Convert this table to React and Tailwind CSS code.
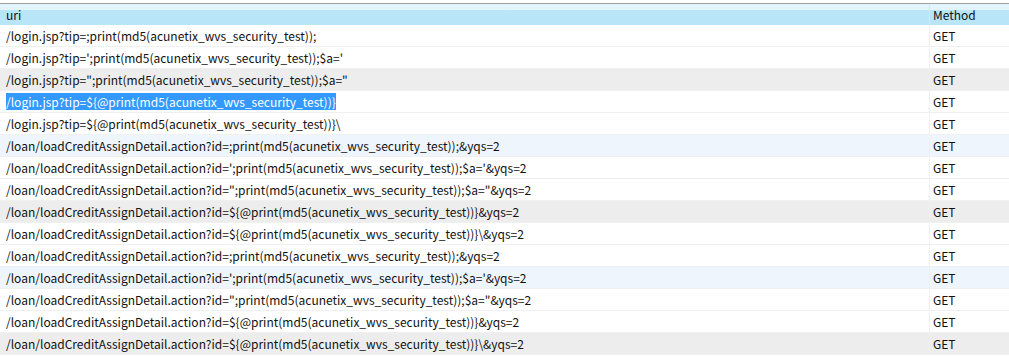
import React from "react";

const rows = [
  ["/login.jsp?tip=;print(md5(acunetix_wvs_security_test));", "w"],
  ["/login.jsp?tip=';print(md5(acunetix_wvs_security_test));$a='", "w"],
  ["/login.jsp?tip=\";print(md5(acunetix_wvs_security_test));$a=\"", "g"],
  ["/login.jsp?tip=${@print(md5(acunetix_wvs_security_test))}", "s"],
  ["/login.jsp?tip=${@print(md5(acunetix_wvs_security_test))}\\", "w"],
  ["/loan/loadCreditAssignDetail.action?id=;print(md5(acunetix_wvs_security_test));&yqs=2", "b"],
  ["/loan/loadCreditAssignDetail.action?id=';print(md5(acunetix_wvs_security_test));$a='&yqs=2", "w"],
  ["/loan/loadCreditAssignDetail.action?id=\";print(md5(acunetix_wvs_security_test));$a=\"&yqs=2", "w"],
  ["/loan/loadCreditAssignDetail.action?id=${@print(md5(acunetix_wvs_security_test))}&yqs=2", "g"],
  ["/loan/loadCreditAssignDetail.action?id=${@print(md5(acunetix_wvs_security_test))}\\&yqs=2", "w"],
  ["/loan/loadCreditAssignDetail.action?id=;print(md5(acunetix_wvs_security_test));&yqs=2", "w"],
  ["/loan/loadCreditAssignDetail.action?id=';print(md5(acunetix_wvs_security_test));$a='&yqs=2", "b"],
  ["/loan/loadCreditAssignDetail.action?id=\";print(md5(acunetix_wvs_security_test));$a=\"&yqs=2", "w"],
  ["/loan/loadCreditAssignDetail.action?id=${@print(md5(acunetix_wvs_security_test))}&yqs=2", "w"],
  ["/loan/loadCreditAssignDetail.action?id=${@print(md5(acunetix_wvs_security_test))}\\&yqs=2", "g"],
];

const bg = { w: "bg-white", g: "bg-[#ededed]", b: "bg-[#eef5fd]", s: "bg-white" };

export default function App() {
  return (
    <div
      className="w-[1009px] h-[359px] bg-white overflow-hidden text-[12px] text-[#111]"
      style={{ fontFamily: '"Noto Sans CJK SC", "Open Sans", sans-serif' }}
    >
      <div className="h-[3px]" />
      <div className="flex h-[22px] border-t border-[#a0a0a0] bg-gradient-to-b from-[#e3f5fc] from-30% to-[#b8e5f8] to-30%">
        <div className="w-[930px] pl-[6px] flex items-center border-r border-[#d5e9f2] leading-none">uri</div>
        <div className="flex-1 pl-[3px] flex items-center leading-none">Method</div>
      </div>
      {rows.map(([uri, t], i) => (
        <div key={i} className={`flex h-[22px] border-b border-[#f0f0f0] ${bg[t]}`}>
          <div className="w-[930px] pl-[6px] flex items-center border-r border-[#f0f0f0] whitespace-nowrap">
            {t === "s" ? (
              <span className="bg-[#3399ff] text-white leading-[17px]">{uri}</span>
            ) : (
              uri
            )}
          </div>
          <div className="flex-1 pl-[3px] flex items-center">GET</div>
        </div>
      ))}
    </div>
  );
}
